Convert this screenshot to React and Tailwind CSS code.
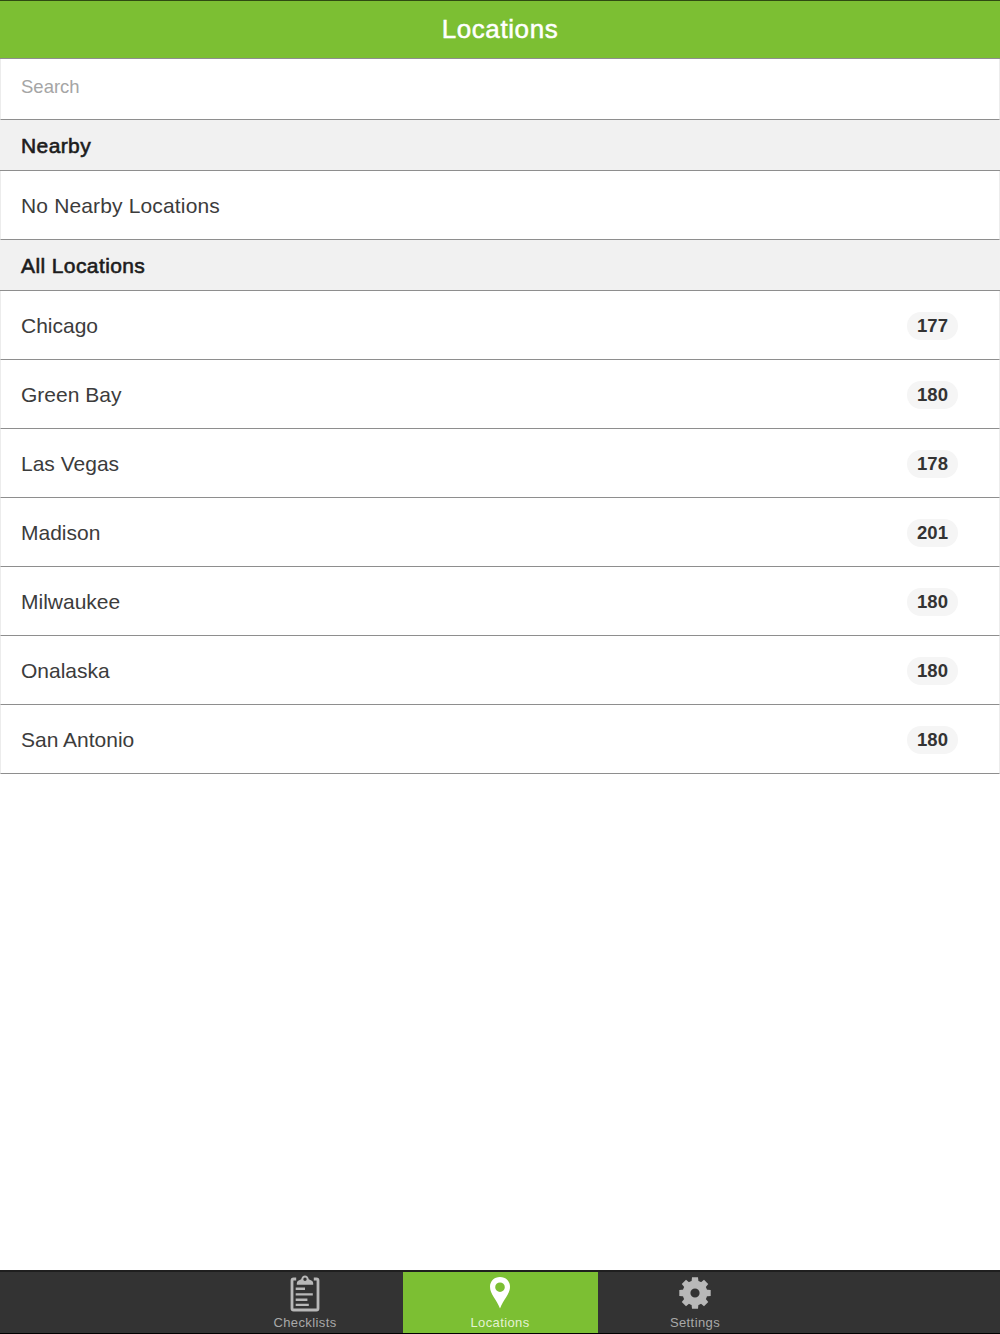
import { useState } from "react";
import clsx from "clsx";

// ─── Data ─────────────────────────────────────────────────────────────────────
const LOCATIONS = [
  { name: "Chicago", count: 177 },
  { name: "Green Bay", count: 180 },
  { name: "Las Vegas", count: 178 },
  { name: "Madison", count: 201 },
  { name: "Milwaukee", count: 180 },
  { name: "Onalaska", count: 180 },
  { name: "San Antonio", count: 180 },
];

const TABS = [
  { label: "Checklists", Icon: ClipboardIcon },
  { label: "Locations", Icon: PinIcon },
  { label: "Settings", Icon: GearIcon },
];

// ─── Icons ────────────────────────────────────────────────────────────────────
function ClipboardIcon() {
  return (
    <svg className="h-[38px] w-[32px]" viewBox="0 0 32 38" fill="currentColor">
      <path
        d="M7.2 4H4.6Q3 4 3 5.6V33.4Q3 35 4.6 35H27.4Q29 35 29 33.4V5.6Q29 4 27.4 4H24.8"
        fill="none"
        stroke="currentColor"
        strokeWidth="2.8"
      />
      <path
        fillRule="evenodd"
        d="M7.8 9.8V8.2Q7.8 6.6 9.2 5.8L12.2 4.3C12.6 2 14 .4 16 .4S19.4 2 19.8 4.3L22.8 5.8Q24.2 6.6 24.2 8.2V9.8ZM16 2.5A1.7 1.7 0 1 0 16 5.9A1.7 1.7 0 1 0 16 2.5Z"
      />
      <path d="M6.7 12.6H16V15H6.7ZM6.7 18.2H23.8V20.6H6.7ZM6.7 23.5H18.4V25.9H6.7ZM6.7 28.7H19.8V31.1H6.7Z" />
    </svg>
  );
}

function PinIcon() {
  return (
    <svg className="h-[38px] w-[32px]" viewBox="0 0 32 38" fill="currentColor">
      <path
        fillRule="evenodd"
        d="M16 2C10.2 2 6 6.2 6 11.8C6 19.3 12.5 24.2 16 33.5C19.5 24.2 26 19.3 26 11.8C26 6.2 21.8 2 16 2ZM16 7.4A4.8 4.8 0 1 1 16 17A4.8 4.8 0 1 1 16 7.4Z"
      />
    </svg>
  );
}

function GearIcon() {
  return (
    <svg className="h-[38px] w-[32px]" viewBox="0 0 32 38" fill="currentColor">
      <circle cx="16" cy="18" r="8.5" fill="none" stroke="currentColor" strokeWidth="7.8" />
      {[0, 45, 90, 135, 180, 225, 270, 315].map((angle) => (
        <path key={angle} d="M13 2.3H19L19.6 8H12.4Z" transform={`rotate(${angle} 16 18)`} />
      ))}
    </svg>
  );
}

// ─── List pieces ──────────────────────────────────────────────────────────────
function SectionHeader({ children }) {
  return (
    <h2 className="flex h-[51px] items-center border-b border-[#8e8e8e] bg-[#f1f1f1] pt-px pl-[21px] text-[21px] tracking-[0.4px] text-[#1c1c1c] [-webkit-text-stroke:0.6px_#1c1c1c]">
      {children}
    </h2>
  );
}

function Row({ name, count }) {
  return (
    <li className="flex h-[69px] items-center justify-between border-x border-b border-x-[#ececec] border-b-[#8e8e8e] pr-[41px] pl-5">
      <span
        className={clsx(
          "pt-px text-[21px] text-[#3c3c3c]",
          count === undefined && "tracking-[0.15px]"
        )}
      >
        {name}
      </span>
      {count !== undefined && (
        <span className="mt-0.5 flex h-7 w-[51px] items-center justify-center rounded-full bg-[#f5f5f5] text-[18.5px] font-bold text-[#333]">
          {count}
        </span>
      )}
    </li>
  );
}

// ─── Main export ──────────────────────────────────────────────────────────────
export default function App() {
  const [query, setQuery] = useState("");
  const [activeTab, setActiveTab] = useState("Locations");

  const visible = LOCATIONS.filter((l) => l.name.toLowerCase().includes(query.toLowerCase()));

  return (
    <div className="flex h-screen flex-col overflow-hidden bg-white font-['Liberation_Sans',Arial,sans-serif]">
      <header className="flex h-[59px] shrink-0 items-center justify-center border-t border-b border-t-[#2f4a12] border-b-[#8e8e8e] bg-[#7cbf33]">
        <h1 className="text-[26px] tracking-[0.6px] text-white [-webkit-text-stroke:0.5px_white]">Locations</h1>
      </header>

      <main className="flex-1">
        <input
          className="block h-[61px] w-full border-x border-b border-x-[#ececec] border-b-[#8e8e8e] pb-1 pl-5 text-[18.5px] text-[#3c3c3c] outline-none placeholder:text-[#a5a5a5]"
          placeholder="Search"
          value={query}
          onChange={(e) => setQuery(e.target.value)}
        />

        <SectionHeader>Nearby</SectionHeader>
        <ul>
          <Row name="No Nearby Locations" />
        </ul>

        <SectionHeader>All Locations</SectionHeader>
        <ul>
          {visible.map((location) => (
            <Row key={location.name} {...location} />
          ))}
        </ul>
      </main>

      <nav className="flex h-16 shrink-0 justify-center border-t-2 border-b border-t-[#1f1f1f] border-b-black bg-[#333]">
        {TABS.map(({ label, Icon }) => (
          <button
            key={label}
            onClick={() => setActiveTab(label)}
            className={clsx(
              "flex w-[195px] flex-col items-center pt-[3px]",
              activeTab === label ? "bg-[#7cbf33] text-white" : "text-[#b8b8b8]"
            )}
          >
            <Icon />
            <span
              className={clsx(
                "mt-0.5 text-[13px] leading-4 tracking-[0.4px]",
                activeTab === label ? "text-[#e4f2d3]" : "text-[#a9a9a9]"
              )}
            >
              {label}
            </span>
          </button>
        ))}
      </nav>
    </div>
  );
}
